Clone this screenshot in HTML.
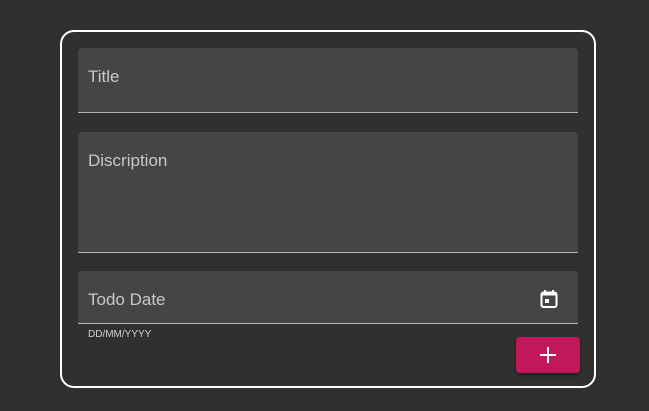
<!DOCTYPE html>
<html><head><meta charset="utf-8"><style>
*{box-sizing:border-box;margin:0;padding:0}
body{width:649px;height:411px;background:#303030;font-family:"Liberation Sans",sans-serif;position:relative;overflow:hidden}
.card{position:absolute;left:60px;top:30px;width:536px;height:358px;border:2px solid #fff;border-radius:14px}
.f{position:absolute;left:78px;width:500px;background:#454545;border-radius:4px 4px 0 0;border-bottom:1px solid #b5b5b5}
.l{position:absolute;left:10px;color:#c8c8c8;font-size:17px}
.btn{position:absolute;left:516px;top:337px;width:64px;height:36px;background:#c2185b;border-radius:4px;box-shadow:0 2px 3px rgba(0,0,0,.4)}
</style></head><body>
<div class="card"></div>
<div class="f" style="top:48px;height:65px"><span class="l" style="top:19px">Title</span></div>
<div class="f" style="top:132px;height:121px"><span class="l" style="top:19px">Discription</span></div>
<div class="f" style="top:271px;height:53px"><span class="l" style="top:19px">Todo Date</span>
<svg style="position:absolute;left:462px;top:18px" width="18" height="20" viewBox="0 0 18 20"><rect x="1.5" y="3.5" width="15" height="14.5" rx="2" fill="none" stroke="#fff" stroke-width="2"/><rect x="1.5" y="3.5" width="15" height="3" fill="#fff"/><rect x="4" y="1" width="2" height="3" fill="#fff"/><rect x="12" y="1" width="2" height="3" fill="#fff"/><rect x="5" y="10" width="4" height="4" fill="#fff"/></svg></div>
<div style="position:absolute;left:88px;top:329px;color:#d0d0d0;font-size:10px">DD/MM/YYYY</div>
<div class="btn"><svg style="position:absolute;left:23px;top:9px" width="18" height="18" viewBox="0 0 18 18"><path d="M8 1h2v16H8zM1 8h16v2H1z" fill="#fff"/></svg></div>
</body></html>
